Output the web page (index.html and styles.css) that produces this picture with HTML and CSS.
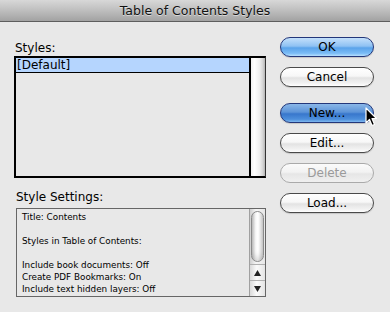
FILE: index.html
```html
<!DOCTYPE html>
<html lang="en">
<head>
  <meta charset="UTF-8">
  <title>Table of Contents Styles</title>
  <link rel="stylesheet" href="styles.css">
</head>
<body>
  <div class="window">
    <div class="titlebar">Table of Contents Styles</div>

    <div class="dialog">
      <div class="left-col">
        <div class="label">Styles:</div>
        <div class="list-box">
          <div class="list-items">
            <div class="list-row selected">[Default]</div>
          </div>
          <div class="list-scroll"></div>
        </div>

        <div class="label settings-label">Style Settings:</div>
        <div class="settings-box">
          <div class="settings-text">
            <div>Title: Contents</div>
            <div>&nbsp;</div>
            <div>Styles in Table of Contents:</div>
            <div>&nbsp;</div>
            <div>Include book documents: Off</div>
            <div>Create PDF Bookmarks: On</div>
            <div>Include text hidden layers: Off</div>
          </div>
          <div class="settings-scroll">
            <div class="scroll-track">
              <div class="scroll-thumb"></div>
            </div>
            <div class="scroll-arrow">
              <svg width="7" height="6" viewBox="0 0 7 6"><polygon points="3.5,0 7,6 0,6" fill="#222"/></svg>
            </div>
            <div class="scroll-arrow">
              <svg width="7" height="6" viewBox="0 0 7 6"><polygon points="0,0 7,0 3.5,6" fill="#222"/></svg>
            </div>
          </div>
        </div>
      </div>

      <div class="right-col">
        <button class="btn btn-blue">OK</button>
        <button class="btn">Cancel</button>
        <button class="btn btn-blue btn-pressed btn-gap">New...</button>
        <button class="btn">Edit...</button>
        <button class="btn btn-disabled">Delete</button>
        <button class="btn">Load...</button>
      </div>
    </div>

    <svg class="cursor" width="13" height="20" viewBox="0 0 13 20">
      <path d="M1 1 L1 16 L4.5 12.5 L7 18.5 L9.5 17.5 L7 11.5 L11.5 11.5 Z" fill="#000" stroke="#fff" stroke-width="1.2" stroke-linejoin="round"/>
    </svg>
  </div>
</body>
</html>
```

FILE: styles.css
```css
body {
  margin: 0;
  background: #e8e8e8;
  font-family: "DejaVu Sans", Verdana, sans-serif;
  color: #000;
}
.window {
  position: relative;
  width: 390px;
  height: 312px;
  overflow: hidden;
}
.titlebar {
  height: 21px;
  line-height: 21px;
  text-align: center;
  font-size: 12.5px;
  color: #111;
  text-shadow: 0 1px 0 rgba(255,255,255,0.5);
  background: linear-gradient(#d8d8d8, #bebebe 50%, #a2a2a2);
  border-bottom: 1px solid #5e5e5e;
}
.dialog {
  display: flex;
}
.left-col {
  margin-left: 14px;
  width: 252px;
  padding-top: 18px;
}
.label {
  font-size: 12px;
  line-height: 16px;
  padding-left: 1px;
}
.settings-label {
  margin-top: 11px;
  margin-bottom: 3px;
  padding-left: 2px;
}
.list-box {
  display: flex;
  height: 122px;
  box-sizing: border-box;
  border: 2px solid #000;
  border-right-width: 1px;
  border-right-color: #333;
  background: #e8e8e8;
}
.list-items {
  flex: 1;
}
.list-row {
  height: 14px;
  line-height: 14px;
  font-size: 12px;
  padding-left: 1px;
}
.list-row.selected {
  background: #b5d5fe;
  border-bottom: 1px solid #000;
}
.list-scroll {
  width: 14px;
  border-left: 2px solid #000;
  background: linear-gradient(to right, #f2f2f2, #ffffff 25%, #f0f0f0 60%, #d4d4d4 85%, #b4b4b4);
}
.settings-box {
  display: flex;
  margin-left: 2px;
  width: 250px;
  height: 89px;
  box-sizing: border-box;
  border: 1px solid #666;
  background: #e8e8e8;
}
.settings-text {
  flex: 1;
  padding: 2px 0 0 5px;
  font-size: 8.8px;
  line-height: 12px;
  color: #000;
}
.settings-scroll {
  width: 15px;
  display: flex;
  flex-direction: column;
  border-left: 1px solid #a0a0a0;
}
.scroll-track {
  flex: 1;
  padding: 2px 1px 0 1px;
  background: linear-gradient(to right, #cfcfcf, #f5f5f5 40%, #e6e6e6);
}
.scroll-thumb {
  height: 51px;
  box-sizing: border-box;
  border: 1px solid #8a8a8a;
  border-radius: 7px;
  background: linear-gradient(to right, #bdbdbd, #f8f8f8 35%, #ffffff 55%, #c8c8c8);
  box-shadow: inset 0 -6px 6px -3px rgba(0,0,0,0.15);
}
.scroll-arrow {
  height: 15px;
  display: flex;
  align-items: center;
  justify-content: center;
  border-top: 1px solid #b0b0b0;
  background: linear-gradient(to right, #dadada, #fbfbfb 45%, #e4e4e4);
}
.right-col {
  display: flex;
  flex-direction: column;
  margin-left: 14px;
  width: 94px;
  padding-top: 15px;
}
.btn {
  height: 20px;
  margin-bottom: 10px;
  padding: 0;
  font-family: "DejaVu Sans", Verdana, sans-serif;
  font-size: 12px;
  color: #000;
  border: 1px solid #4a4a4a;
  border-radius: 10px;
  background: linear-gradient(#ffffff, #f7f7f7 45%, #e3e3e3 55%, #f2f2f2 85%, #ffffff);
  box-shadow: 0 1px 1px rgba(0,0,0,0.15);
}
.btn-gap {
  margin-top: 6px;
}
.btn-blue {
  border-color: #23377a;
  background: linear-gradient(#c4e0fb, #8fc2f3 45%, #5aa3ea 55%, #7bbcf6 85%, #b7e0ff);
}
.btn-pressed {
  background: linear-gradient(#8ab7e8, #5d94d8 45%, #3877cc 55%, #4d8fdc 85%, #7fb8ef);
}
.btn-disabled {
  color: #9a9a9a;
  border-color: #aaa;
  box-shadow: none;
  background: linear-gradient(#fbfbfb, #f2f2f2 45%, #e6e6e6 55%, #f0f0f0);
}
.cursor {
  position: absolute;
  left: 365px;
  top: 107px;
}
```
